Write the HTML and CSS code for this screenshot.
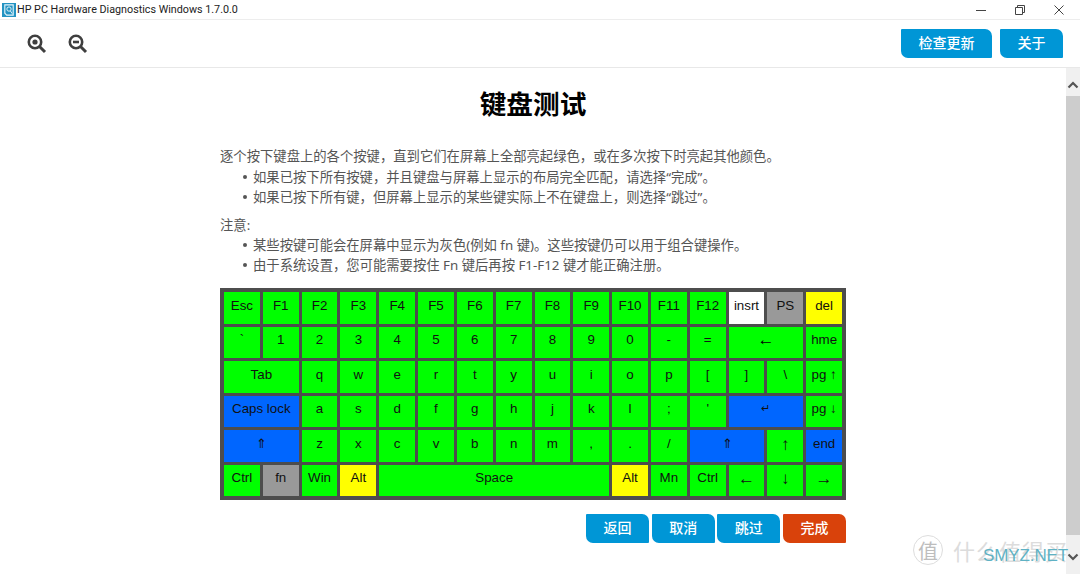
FILE: index.html
```html
<!DOCTYPE html>
<html>
<head>
    <title>HP PC Hardware Diagnostics Windows</title>
    <link rel="stylesheet" href="styles.css">
</head>
<body>
    <div class="titlebar">
        <svg class="app-icon" width="14" height="14" viewBox="0 0 15 15">
            <rect width="15" height="15" fill="#2493c2"/>
            <path d="M3 2h9v11H5l-2-2z" fill="none" stroke="#e6f5fb" stroke-width="1.2"/>
            <circle cx="7.5" cy="6.5" r="2.3" fill="none" stroke="#e6f5fb"/>
            <path d="M9 8.5l2 3" stroke="#e6f5fb"/>
        </svg>
        <span class="app-name">HP PC Hardware Diagnostics Windows 1.7.0.0</span>
        <div class="win-btns">
            <svg width="10" height="10" viewBox="0 0 10 10"><path d="M0 5.5h10" stroke="#444"/></svg>
            <svg width="10" height="10" viewBox="0 0 10 10"><path d="M.5 2.5h7v7h-7zM2.5 2.5v-2h7v7h-2" fill="none" stroke="#444"/></svg>
            <svg width="10" height="10" viewBox="0 0 10 10"><path d="M.5.5l9 9M9.5.5l-9 9" stroke="#444"/></svg>
        </div>
    </div>

    <div class="toolbar">
        <div class="zoom-btns">
            <svg width="20" height="20" viewBox="0 0 20 20">
                <circle cx="8" cy="8" r="6.2" fill="none" stroke="#3f3f3f" stroke-width="2.6"/>
                <circle cx="8" cy="8" r="2.6" fill="#3f3f3f"/>
                <path d="M12.5 12.5l5.5 5.5" stroke="#3f3f3f" stroke-width="3"/>
            </svg>
            <svg width="20" height="20" viewBox="0 0 20 20">
                <circle cx="8" cy="8" r="6.2" fill="none" stroke="#3f3f3f" stroke-width="2.6"/>
                <path d="M5 8h6" stroke="#3f3f3f" stroke-width="2.6"/>
                <path d="M12.5 12.5l5.5 5.5" stroke="#3f3f3f" stroke-width="3"/>
            </svg>
        </div>
        <div class="top-links">
            <a class="btn btn-update">检查更新</a>
            <a class="btn btn-about">关于</a>
        </div>
    </div>

    <div class="main">
        <div class="content">
            <h1>键盘测试</h1>
            <div class="instructions">
                <p class="intro">逐个按下键盘上的各个按键&#65292;直到它们在屏幕上全部亮起绿色&#65292;或在多次按下时亮起其他颜色。</p>
                <ul>
                    <li>如果已按下所有按键&#65292;并且键盘与屏幕上显示的布局完全匹配&#65292;请选择“完成”。</li>
                    <li>如果已按下所有键&#65292;但屏幕上显示的某些键实际上不在键盘上&#65292;则选择“跳过”。</li>
                </ul>
                <p class="note">注意:</p>
                <ul>
                    <li>某些按键可能会在屏幕中显示为灰色(例如 fn 键)。这些按键仍可以用于组合键操作。</li>
                    <li>由于系统设置&#65292;您可能需要按住 Fn 键后再按 F1-F12 键才能正确注册。</li>
                </ul>
            </div>

            <div class="keyboard">
                <div class="key">Esc</div><div class="key">F1</div><div class="key">F2</div><div class="key">F3</div>
                <div class="key">F4</div><div class="key">F5</div><div class="key">F6</div><div class="key">F7</div>
                <div class="key">F8</div><div class="key">F9</div><div class="key">F10</div><div class="key">F11</div>
                <div class="key">F12</div><div class="key white">insrt</div><div class="key gray">PS</div><div class="key yellow">del</div>

                <div class="key">`</div><div class="key">1</div><div class="key">2</div><div class="key">3</div>
                <div class="key">4</div><div class="key">5</div><div class="key">6</div><div class="key">7</div>
                <div class="key">8</div><div class="key">9</div><div class="key">0</div><div class="key">-</div>
                <div class="key">=</div><div class="key wide backspace">←</div><div class="key">hme</div>

                <div class="key wide">Tab</div><div class="key">q</div><div class="key">w</div><div class="key">e</div>
                <div class="key">r</div><div class="key">t</div><div class="key">y</div><div class="key">u</div>
                <div class="key">i</div><div class="key">o</div><div class="key">p</div><div class="key">[</div>
                <div class="key">]</div><div class="key">\</div><div class="key">pg ↑</div>

                <div class="key wide blue">Caps lock</div><div class="key">a</div><div class="key">s</div><div class="key">d</div>
                <div class="key">f</div><div class="key">g</div><div class="key">h</div><div class="key">j</div>
                <div class="key">k</div><div class="key">l</div><div class="key">;</div><div class="key">'</div>
                <div class="key wide blue enter">↵</div><div class="key">pg ↓</div>

                <div class="key wide blue">⇑</div><div class="key">z</div><div class="key">x</div><div class="key">c</div>
                <div class="key">v</div><div class="key">b</div><div class="key">n</div><div class="key">m</div>
                <div class="key">,</div><div class="key">.</div><div class="key">/</div>
                <div class="key wide blue">⇑</div><div class="key arrow">↑</div><div class="key blue">end</div>

                <div class="key">Ctrl</div><div class="key gray">fn</div><div class="key">Win</div><div class="key yellow">Alt</div>
                <div class="key space">Space</div><div class="key yellow">Alt</div><div class="key">Mn</div><div class="key">Ctrl</div>
                <div class="key arrow">←</div><div class="key arrow">↓</div><div class="key arrow">→</div>
            </div>

            <div class="actions">
                <a class="btn">返回</a>
                <a class="btn">取消</a>
                <a class="btn">跳过</a>
                <a class="btn btn-finish">完成</a>
            </div>
        </div>

        <div class="scrollbar">
            <svg width="14" height="10" viewBox="0 0 14 10"><path d="M2.5 7.5L7 3l4.5 4.5" fill="none" stroke="#555" stroke-width="2.2"/></svg>
            <div class="thumb"></div>
            <svg width="14" height="10" viewBox="0 0 14 10"><path d="M2.5 2.5L7 7l4.5-4.5" fill="none" stroke="#555" stroke-width="2.2"/></svg>
        </div>
    </div>

    <!-- site watermark over the corner -->
    <div class="watermark">
        <span class="wm-circle">值</span>
        <span class="wm-text">什么值得买</span>
        <span class="wm-site">SMYZ.NET</span>
    </div>
</body>
</html>
```

FILE: styles.css
```css
html, body {
    margin: 0;
    padding: 0;
    height: 574px;
    overflow: hidden;
}

body {
    position: relative;
    background-color: #ffffff;
    font-family: "Noto Sans", "Noto Sans CJK SC", sans-serif;
}

.titlebar {
    height: 19px;
    display: flex;
    align-items: center;
    padding-left: 2px;
    background-color: #ffffff;
}

.app-name {
    margin-left: 1px;
    font-family: Roboto, sans-serif;
    font-size: 10.75px;
    color: #222222;
}

.win-btns {
    margin-left: auto;
    padding-right: 16px;
    display: flex;
    gap: 29px;
    align-items: center;
}

.toolbar {
    height: 47px;
    display: flex;
    justify-content: space-between;
    align-items: center;
    background-color: #ffffff;
    border-top: 1px solid #ededed;
    border-bottom: 1px solid #e8e8e8;
}

.zoom-btns {
    display: flex;
    gap: 21px;
    padding-left: 27px;
}

.top-links {
    display: flex;
    gap: 8px;
    padding-right: 17px;
    padding-bottom: 1px;
}

.btn {
    display: flex;
    justify-content: center;
    align-items: center;
    box-sizing: border-box;
    width: 63px;
    height: 29px;
    padding-bottom: 3px;
    background-color: #0096d6;
    color: #ffffff;
    font-size: 14px;
    font-weight: 500;
    border-radius: 1px 7px 1px 7px;
}

.btn-update {
    width: 91px;
}

.btn-finish {
    background-color: #d9420b;
}

.main {
    height: 506px;
    display: flex;
}

.content {
    flex: 1;
    display: flex;
    flex-direction: column;
    align-items: center;
}

h1 {
    margin: 18px 0 0 0;
    font-size: 26.67px;
    line-height: 36px;
    font-weight: 700;
    color: #000000;
}

.instructions {
    width: 626px;
    margin-top: 24px;
    font-size: 13.33px;
    line-height: 20px;
    color: #555555;
}

.instructions p {
    margin: 0;
}

.instructions .intro {
    line-height: 21px;
}

.instructions ul {
    margin: 0;
    padding-left: 33px;
    list-style: none;
}

.instructions li {
    position: relative;
}

.instructions li::before {
    content: "";
    position: absolute;
    left: -10px;
    top: 8px;
    width: 4px;
    height: 4px;
    border-radius: 50%;
    background-color: #555555;
}

.instructions .note {
    margin-top: 8px;
}

.keyboard {
    width: 626px;
    height: 212px;
    box-sizing: border-box;
    margin-top: 13px;
    padding: 4px;
    display: grid;
    grid-template-columns: repeat(16, 1fr);
    grid-template-rows: repeat(6, 1fr);
    gap: 3px;
    background-color: #4d4d4d;
}

.key {
    display: flex;
    justify-content: center;
    align-items: center;
    padding-bottom: 5px;
    background-color: #00ff00;
    color: #111111;
    font-family: "Liberation Sans", sans-serif;
    font-size: 13.33px;
}

.wide {
    grid-column: span 2;
}

.space {
    grid-column: span 6;
}

.white {
    background-color: #ffffff;
}

.gray {
    background-color: #999999;
}

.yellow {
    background-color: #ffff00;
}

.blue {
    background-color: #0066ff;
}

.arrow {
    font-size: 17px;
    padding-bottom: 2px;
}

.backspace {
    font-size: 17px;
    font-weight: 700;
    color: #000000;
}

.enter {
    font-size: 11px;
}

.actions {
    display: flex;
    gap: 2.67px;
    width: 626px;
    justify-content: flex-end;
    margin-top: 14px;
}

.scrollbar {
    width: 14px;
    background-color: #f0f0f0;
    display: flex;
    flex-direction: column;
    align-items: center;
    padding-top: 12px;
    padding-bottom: 12px;
    box-sizing: border-box;
}

.thumb {
    width: 14px;
    flex: 1;
    margin: 6px 0 17px;
    background-color: #cdcdcd;
}

.watermark {
    position: absolute;
    left: 913px;
    top: 534px;
    display: flex;
    align-items: center;
    color: #cfcfcf;
}

.wm-circle {
    width: 28px;
    height: 28px;
    border: 1px solid #dddddd;
    border-radius: 50%;
    display: flex;
    justify-content: center;
    align-items: center;
    font-size: 20px;
    color: #bdbdbd;
}

.wm-text {
    margin-left: 10px;
    font-size: 22px;
    letter-spacing: 1px;
    white-space: nowrap;
    color: #dcdcdc;
}

.wm-site {
    position: absolute;
    left: 70px;
    top: 12px;
    font-family: "Liberation Sans", sans-serif;
    font-size: 17px;
    letter-spacing: -0.1px;
    color: #5fb2c4;
}
```
